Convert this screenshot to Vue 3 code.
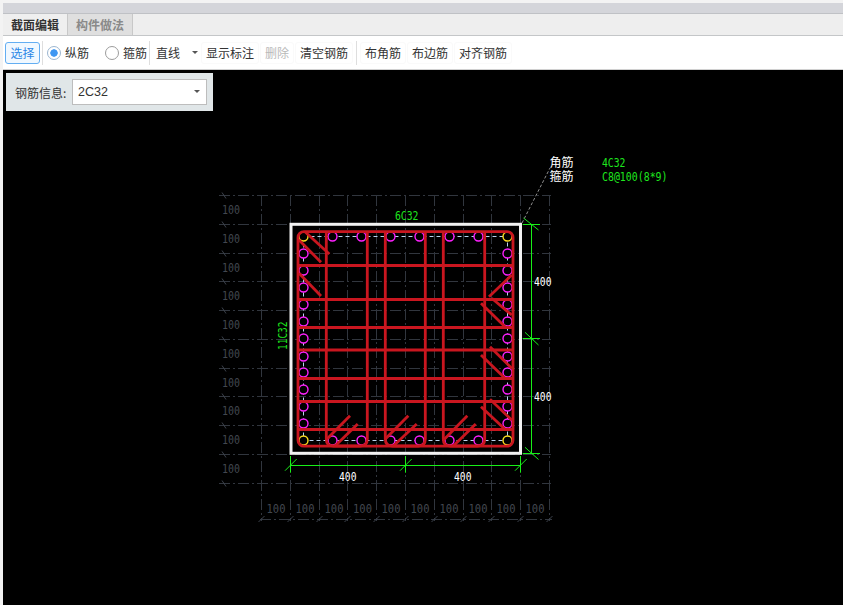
<script setup>
const hY = Array.from({ length: 11 }, (_, i) => Math.round(195 + i * 28.78) + 0.5)
const vX = Array.from({ length: 11 }, (_, i) => Math.round(261 + i * 28.8) + 0.5)
const leftLabels = [209, 238, 267, 295, 324, 353, 382, 410, 439, 468]
const bottomLabels = [276, 305, 334, 362.5, 391, 420, 449, 478, 506, 535]
const cols = [303.5, 332.5, 361.5, 390.5, 419.5, 449.5, 478.5, 507.5]
const rows = [253.5, 270.5, 287.5, 304.5, 321.5, 338.5, 356.5, 372.5, 389.5, 406.5, 423.5]
const sideBars = [
  ...cols.slice(1, -1).flatMap((x) => [{ x, y: 236.5 }, { x, y: 440.5 }]),
  ...rows.flatMap((y) => [{ x: 303.5, y }, { x: 507.5, y }])
]
const cornerBars = [
  { x: 303.5, y: 236.5 }, { x: 507.5, y: 236.5 }, { x: 303.5, y: 440.5 }, { x: 507.5, y: 440.5 }
]
const hooks = [
  [305, 231.7, 329.3, 254], [299, 240, 321, 262.3], [299, 273.3, 321, 296],
  [511.7, 275, 489, 296.7], [491.7, 298.3, 511.7, 315], [481, 303.3, 505, 326.7],
  [490, 346.7, 511.7, 368.3], [481, 355, 505, 378.3],
  [490, 399.3, 511.7, 420], [481, 406.7, 505, 429.3],
  [350, 415.7, 326.7, 439.3], [357.7, 424, 335, 446],
  [408.3, 415.7, 385, 439.3], [416.7, 424, 393.3, 446],
  [467.3, 415.7, 444.3, 439.3], [475.7, 424, 453.3, 446]
]
const stirrups = [[326.3, 367.3], [385.3, 425.3], [443.3, 484.7]].map(
  ([a, b]) => `M${a} 231.6V439Q${a} 446 ${a + 7} 446H${b - 7}Q${b} 446 ${b} 439V231.6`
)
const rails = [265.5, 299.5, 327.5, 350, 378.5, 401.5, 429.5]
</script>

<template>
  <div class="page">
    <div class="title"></div>
    <div class="tabs">
      <div class="tab active">截面编辑</div>
      <div class="tab">构件做法</div>
    </div>
    <div class="toolbar">
      <button class="btn primary">选择</button>
      <span class="sep"></span>
      <label class="radio on"><i></i>纵筋</label>
      <label class="radio second"><i></i>箍筋</label>
      <span class="sep"></span>
      <div class="combo">直线<b class="caret"></b></div>
      <button class="btn">显示标注</button>
      <button class="btn off">删除</button>
      <button class="btn">清空钢筋</button>
      <span class="sep wide"></span>
      <button class="btn">布角筋</button>
      <button class="btn">布边筋</button>
      <button class="btn">对齐钢筋</button>
    </div>
    <div class="canvas">
      <svg class="drawing" width="840" height="535" viewBox="3 70 840 535">
        <g class="grid">
          <line v-for="y in hY" :key="'h' + y" x1="219" :x2="551" :y1="y" :y2="y" />
          <line v-for="x in vX" :key="'v' + x" :x1="x" :x2="x" y1="195" y2="521" />
          <line x1="260" x2="552" y1="519.5" y2="519.5" />
        </g>
        <g class="ticks">
          <line v-for="y in hY" :key="'t' + y" x1="222" :y1="y - 3" x2="226" :y2="y + 3" />
          <line v-for="x in vX" :key="'b' + x" :x1="x - 3" y1="522" :x2="x + 3" y2="516" />
        </g>
        <text v-for="y in leftLabels" :key="'l' + y" class="dim-label" x="222" :y="y + 5" textLength="18" lengthAdjust="spacingAndGlyphs">100</text>
        <text v-for="x in bottomLabels" :key="'n' + x" class="dim-label" :x="x - 9.5" y="513" textLength="19" lengthAdjust="spacingAndGlyphs">100</text>

        <rect class="frame" x="291" y="224.3" width="229.5" height="229" />

        <rect class="link" x="303.5" y="236.5" width="204" height="204" />
        <circle v-for="b in sideBars" :key="b.x + '-' + b.y" class="bar" :cx="b.x" :cy="b.y" r="4.5" />
        <circle v-for="b in cornerBars" :key="'c' + b.x + b.y" class="corner" :cx="b.x" :cy="b.y" r="4.5" />

        <g class="steel">
          <rect x="298" y="231.6" width="215" height="214.6" rx="6" />
          <path v-for="d in stirrups" :key="d" :d="d" />
          <line v-for="y in rails" :key="'r' + y" x1="298" x2="513" :y1="y" :y2="y" />
          <line v-for="h in hooks" :key="h.join()" :x1="h[0]" :y1="h[1]" :x2="h[2]" :y2="h[3]" />
        </g>

        <g class="green">
          <line x1="531.5" x2="531.5" y1="224" y2="454" />
          <line x1="522.7" x2="540" y1="224.5" y2="224.5" />
          <line x1="522.7" x2="540" y1="338.5" y2="338.5" />
          <line x1="522.7" x2="540" y1="453.5" y2="453.5" />
          <line x1="523.5" y1="218" x2="538.5" y2="230" />
          <line x1="525" y1="332.3" x2="538.5" y2="345" />
          <line x1="525" y1="447.3" x2="538.5" y2="459.5" />
          <line x1="290.5" x2="520.5" y1="465.5" y2="465.5" />
          <line x1="290.5" x2="290.5" y1="456" y2="472.7" />
          <line x1="405.5" x2="405.5" y1="456" y2="472.7" />
          <line x1="520.5" x2="520.5" y1="456" y2="472.7" />
          <line x1="285" y1="470.7" x2="296.7" y2="459" />
          <line x1="400" y1="470.7" x2="411.7" y2="459" />
          <line x1="515" y1="470.7" x2="526.7" y2="459" />
        </g>

        <line class="leader" x1="522" y1="223" x2="550" y2="168" />

        <text class="num white" x="534" y="285.5" textLength="17.5" lengthAdjust="spacingAndGlyphs">400</text>
        <text class="num white" x="534" y="400.5" textLength="17.5" lengthAdjust="spacingAndGlyphs">400</text>
        <text class="num white" x="339" y="480.5" textLength="17.5" lengthAdjust="spacingAndGlyphs">400</text>
        <text class="num white" x="454" y="480.5" textLength="17.5" lengthAdjust="spacingAndGlyphs">400</text>
        <text class="num lime" x="395" y="220" textLength="23.5" lengthAdjust="spacingAndGlyphs">6C32</text>
        <text class="num lime" transform="translate(287 350) rotate(-90)" x="0" y="0" textLength="28.5" lengthAdjust="spacingAndGlyphs">11C32</text>
        <text class="cjk" x="549.5" y="167">角筋</text>
        <text class="cjk" x="549.5" y="181">箍筋</text>
        <text class="num lime" x="602" y="167" textLength="23.5" lengthAdjust="spacingAndGlyphs">4C32</text>
        <text class="num lime" x="602" y="181" textLength="65.5" lengthAdjust="spacingAndGlyphs">C8@100(8*9)</text>
      </svg>
      <div class="panel">
        <span class="panel-label">钢筋信息:</span>
        <div class="select">2C32<b class="caret"></b></div>
      </div>
    </div>
  </div>
</template>

<style>
html, body { margin: 0; background: #f1f1f1; }
</style>

<style scoped>
.page {
  width: 843px;
  height: 605px;
  box-sizing: border-box;
  padding: 3px 0 0 3px;
  display: flex;
  flex-direction: column;
  overflow: hidden;
  background: #f3f3f3;
  font-family: "Noto Sans CJK SC", "Liberation Sans", sans-serif;
  font-size: 12px;
  color: #333;
}
.title {
  height: 10px;
  flex: none;
  background: #d4d5da;
  border-bottom: 1px solid #bfc1c5;
}
.tabs {
  height: 21px;
  flex: none;
  display: flex;
  background: #eeeeee;
  border-bottom: 1px solid #c4c6c8;
}
.tab {
  width: 65px;
  box-sizing: border-box;
  text-align: center;
  line-height: 22px;
  font-weight: 700;
  color: #8a8a8a;
  background: #dfdfdf;
  border-right: 1px solid #c8c8c8;
}
.tab.active {
  color: #333;
  background: #efefef;
}
.toolbar {
  height: 34px;
  flex: none;
  display: flex;
  align-items: center;
  box-sizing: border-box;
  padding: 0 0 0 2px;
  background: #fff;
  border-bottom: 1px solid #d0d0d0;
}
.btn {
  height: 22px;
  box-sizing: border-box;
  padding: 0 4px;
  margin-right: 1px;
  border: 1px solid #fafafa;
  border-radius: 3px;
  background: #fff;
  font: inherit;
  color: #333;
  line-height: 20px;
  white-space: nowrap;
}
.btn.primary {
  width: 35px;
  padding: 0;
  margin: 0;
  color: #2b87e6;
  background: #f0f8ff;
  border-color: #63aef2;
}
.btn.off { color: #b9b9b9; }
.sep {
  width: 1px;
  height: 24px;
  background: #dedede;
  margin: 0 4px 0 2px;
  flex: none;
}
.sep.wide { margin: 0 3px 0 2px; }
.radio {
  display: flex;
  align-items: center;
  white-space: nowrap;
  width: 58px;
}
.radio.second { width: 42px; }
.radio i {
  width: 12px;
  height: 12px;
  margin-right: 4px;
  border: 1px solid #9c9c9c;
  border-radius: 50%;
  background: #fff;
  flex: none;
}
.radio.on i {
  border-color: #9cb6d0;
  background: radial-gradient(circle, #3f97f2 0 3.4px, #fff 4px);
}
.combo {
  width: 47px;
  height: 22px;
  box-sizing: border-box;
  padding-left: 2px;
  line-height: 21px;
  position: relative;
}
.caret {
  position: absolute;
  width: 0;
  height: 0;
  border-left: 3px solid transparent;
  border-right: 3px solid transparent;
  border-top: 3px solid #555;
}
.combo .caret { right: 3px; top: 9px; }
.canvas {
  flex: 1;
  position: relative;
  background: #000;
  overflow: hidden;
}
.drawing { display: block; }
.grid line {
  stroke: #31363e;
  stroke-width: 1;
  stroke-dasharray: 11 3 2 3;
}
.ticks line { stroke: #3c424c; stroke-width: 1; }
.dim-label {
  fill: #42474f;
  font-family: "DejaVu Sans Mono", monospace;
  font-size: 13px;
}
.frame { fill: none; stroke: #f2f2f2; stroke-width: 3; }
.link { fill: none; stroke: #b9d2ef; stroke-width: 1; stroke-dasharray: 4 3; }
.bar { fill: #000; stroke: #ff20ff; stroke-width: 1.4; }
.corner { fill: #000; stroke: #ffe020; stroke-width: 1.4; }
.steel rect, .steel line, .steel path { fill: none; stroke: #c9161f; stroke-width: 2.8; }
.green line { stroke: #18f018; stroke-width: 1; }
.leader { stroke: #8f8f8f; stroke-width: 1; stroke-dasharray: 3 2; }
.num { font-family: "DejaVu Sans Mono", monospace; font-size: 12.5px; }
.white { fill: #fff; }
.lime { fill: #1ee61e; }
.cjk {
  fill: #fff;
  font-family: "Noto Sans CJK SC", sans-serif;
  font-size: 12px;
}
.panel {
  position: absolute;
  left: 3px;
  top: 3px;
  width: 207px;
  height: 38px;
  box-sizing: border-box;
  padding: 6px 6px 6px 9px;
  display: flex;
  align-items: center;
  background: #e0e6e8;
}
.panel-label { width: 57px; flex: none; }
.select {
  flex: 1;
  height: 26px;
  box-sizing: border-box;
  padding-left: 5px;
  line-height: 24px;
  background: #fff;
  border: 1px solid #bdbdbd;
  position: relative;
  font-family: "Liberation Sans", sans-serif;
  font-size: 12.5px;
}
.select .caret { right: 6px; top: 10px; }
</style>
